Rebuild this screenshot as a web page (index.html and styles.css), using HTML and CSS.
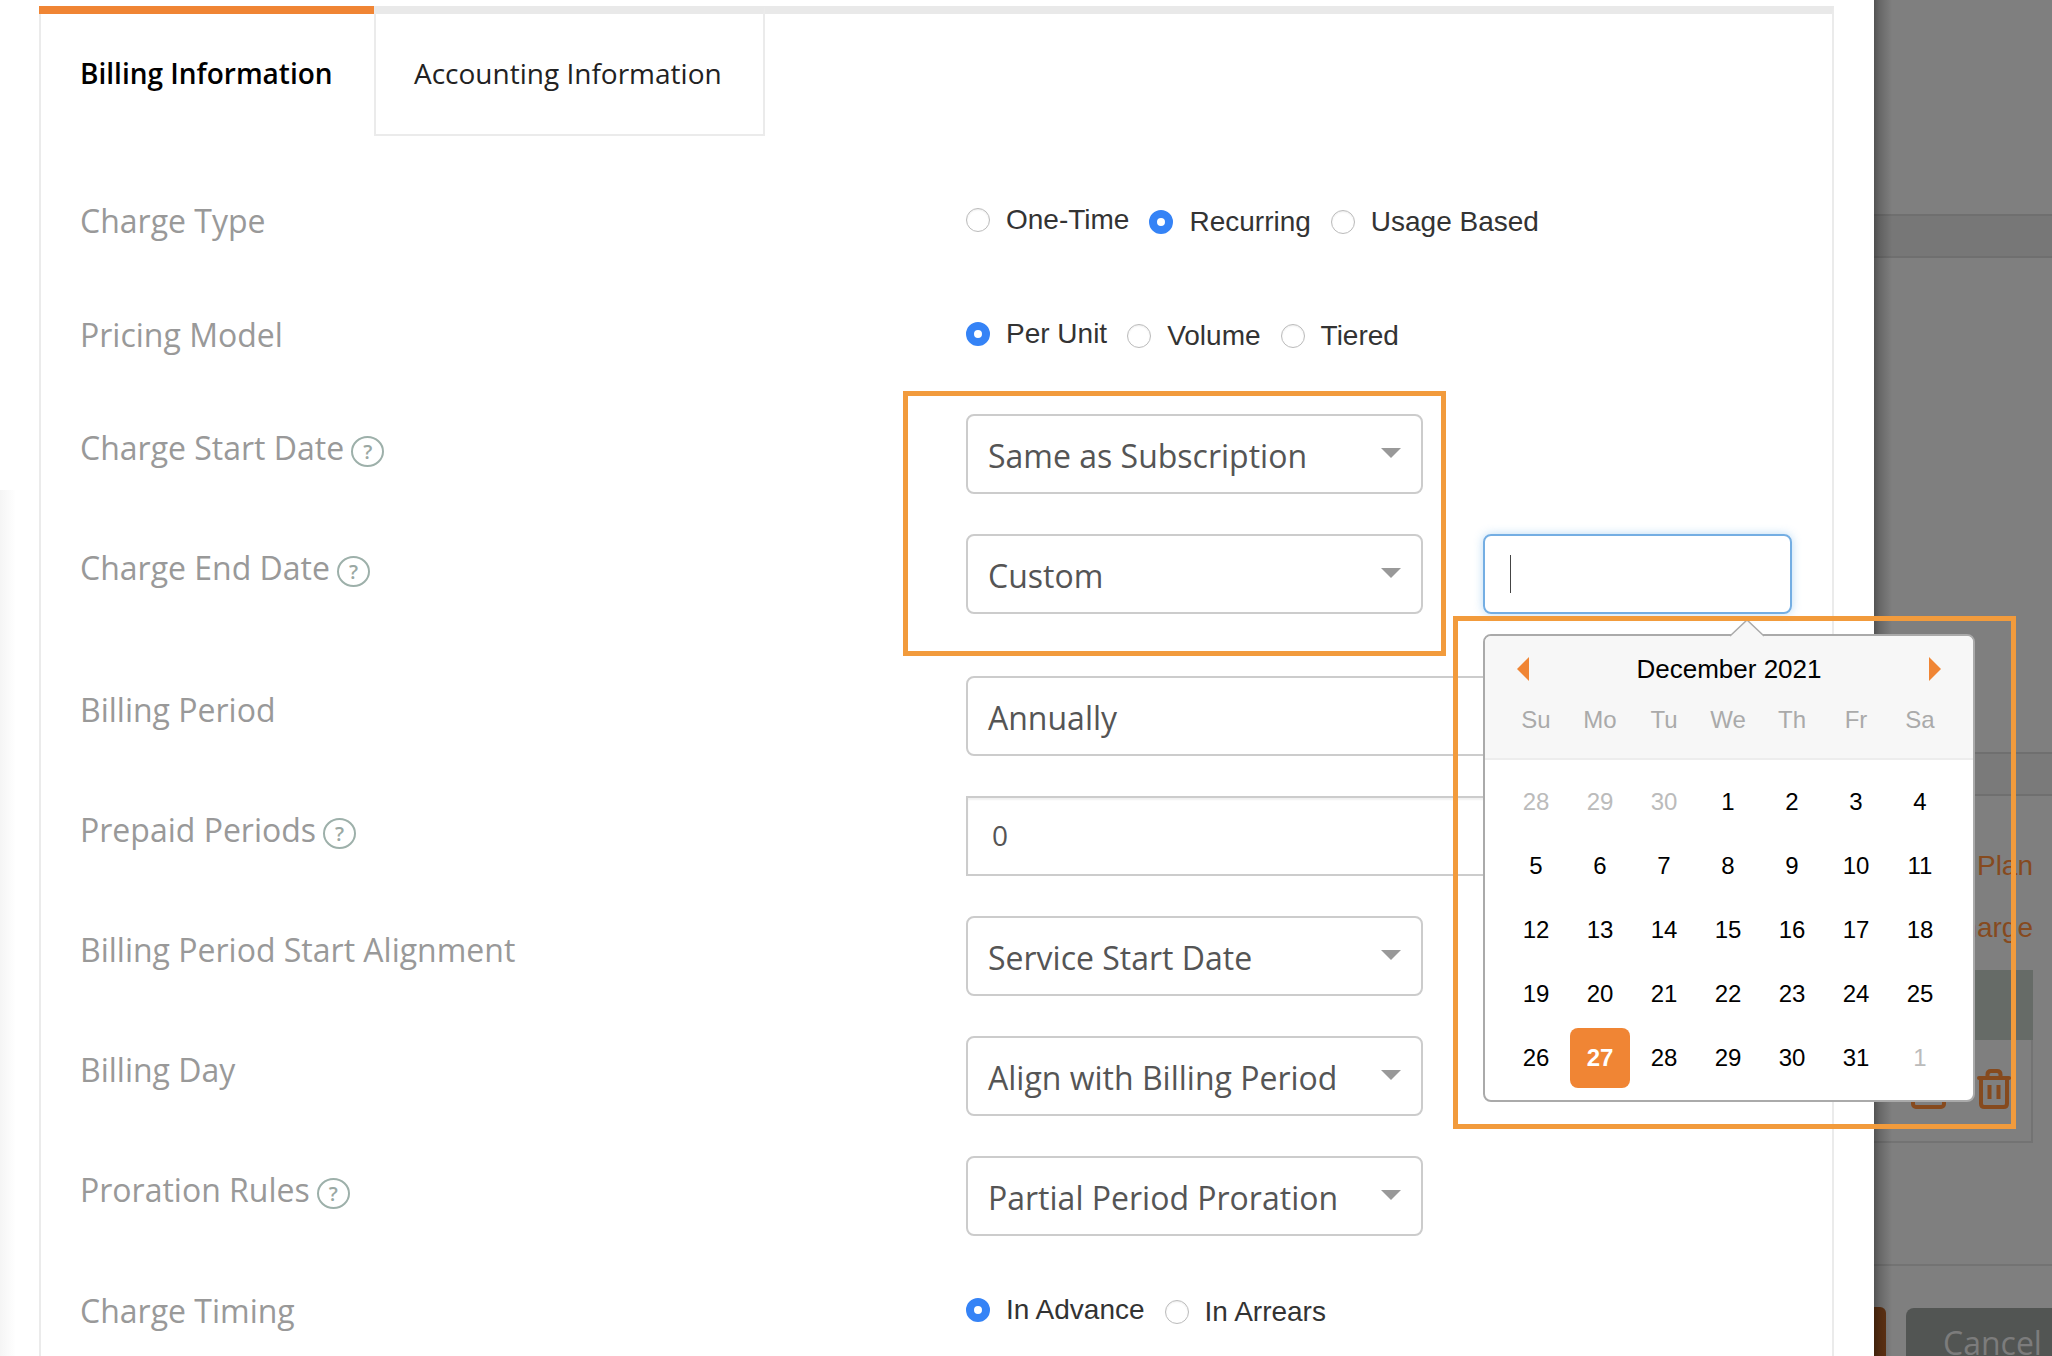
FILE: index.html
```html
<!DOCTYPE html>
<html lang="en">
<head>
<meta charset="UTF-8">
<meta name="viewport" content="width=device-width, initial-scale=1.0">
<title>Billing Information</title>
<link rel="stylesheet" href="styles.css">
</head>
<body>

<div class="page">

  <!-- Drawer with the charge form -->
  <div class="drawer">
    <div class="panel">
      <div class="tabs">
        <div class="tab tab-active">Billing Information</div>
        <div class="tab">Accounting Information</div>
      </div>

      <div class="form">
        <div class="form-row radio-row row-wide">
          <div class="field-label">Charge Type</div>
          <div class="radio-group">
            <label class="radio radio-first"><span class="radio-dot"></span>One-Time</label>
            <label class="radio"><span class="radio-dot checked"></span>Recurring</label>
            <label class="radio"><span class="radio-dot"></span>Usage Based</label>
          </div>
        </div>

        <div class="form-row radio-row">
          <div class="field-label">Pricing Model</div>
          <div class="radio-group">
            <label class="radio radio-first"><span class="radio-dot checked"></span>Per Unit</label>
            <label class="radio"><span class="radio-dot"></span>Volume</label>
            <label class="radio"><span class="radio-dot"></span>Tiered</label>
          </div>
        </div>

        <div class="form-row">
          <div class="field-label">Charge Start Date<span class="help">?</span></div>
          <div class="select">Same as Subscription<span class="select-arrow"></span></div>
        </div>

        <div class="form-row row-wide">
          <div class="field-label">Charge End Date<span class="help">?</span></div>
          <div class="field-group">
            <div class="select">Custom<span class="select-arrow"></span></div>
            <div class="date-input"><span class="text-cursor"></span></div>
          </div>
        </div>

        <div class="form-row">
          <div class="field-label">Billing Period</div>
          <div class="select select-long">Annually<span class="select-arrow"></span></div>
        </div>

        <div class="form-row">
          <div class="field-label">Prepaid Periods<span class="help">?</span></div>
          <div class="number-input">0</div>
        </div>

        <div class="form-row">
          <div class="field-label">Billing Period Start Alignment</div>
          <div class="select">Service Start Date<span class="select-arrow"></span></div>
        </div>

        <div class="form-row">
          <div class="field-label">Billing Day</div>
          <div class="select">Align with Billing Period<span class="select-arrow"></span></div>
        </div>

        <div class="form-row row-wide">
          <div class="field-label">Proration Rules<span class="help">?</span></div>
          <div class="select">Partial Period Proration<span class="select-arrow"></span></div>
        </div>

        <div class="form-row radio-row">
          <div class="field-label">Charge Timing</div>
          <div class="radio-group">
            <label class="radio radio-first"><span class="radio-dot checked"></span>In Advance</label>
            <label class="radio"><span class="radio-dot"></span>In Arrears</label>
          </div>
        </div>
      </div>
    </div>
  </div>

  <!-- Dimmed page behind the drawer -->
  <div class="backdrop">
    <div class="band"></div>
    <div class="band band-second"></div>
    <div class="actions">
      <div class="action">Add Plan</div>
      <div class="action">Add Charge</div>
    </div>
    <div class="charge-table">
      <div class="charge-head"></div>
      <div class="charge-row">
        <svg class="icon" width="35" height="40" viewBox="0 0 35 40" fill="none" stroke="#864a1e" stroke-width="4">
          <rect x="2" y="8" width="31" height="30" rx="3"/>
        </svg>
        <svg class="icon" width="34" height="40" viewBox="0 0 34 40" fill="none" stroke="#864a1e" stroke-width="4" stroke-linecap="round">
          <path d="M2 9H32"/>
          <path d="M10.500 8V5.500Q10.500 2 14 2H20Q23.500 2 23.500 5.500V8"/>
          <path d="M4 10V34.500Q4 38 7.500 38H26.500Q30 38 30 34.500V10"/>
          <path d="M12.500 16V30M21.500 16V30" stroke-linecap="butt"/>
        </svg>
      </div>
    </div>
    <div class="footer">
      <div class="btn-save"></div>
      <div class="btn-cancel">Cancel</div>
    </div>
  </div>

  <!-- Date picker -->
  <div class="calendar">
    <svg class="calendar-caret" width="36" height="18" viewBox="0 0 36 18">
      <path d="M1 17L18 1L35 17" fill="#f7f7f7" stroke="#aaaaaa" stroke-width="1.500"/>
    </svg>
    <div class="calendar-head">
      <div class="calendar-title">
        <span class="nav-prev"></span>
        <span>December 2021</span>
        <span class="nav-next"></span>
      </div>
      <div class="calendar-grid weekdays">
        <div>Su</div><div>Mo</div><div>Tu</div><div>We</div><div>Th</div><div>Fr</div><div>Sa</div>
      </div>
    </div>
    <div class="calendar-grid days">
      <div class="muted">28</div><div class="muted">29</div><div class="muted">30</div><div>1</div><div>2</div><div>3</div><div>4</div>
      <div>5</div><div>6</div><div>7</div><div>8</div><div>9</div><div>10</div><div>11</div>
      <div>12</div><div>13</div><div>14</div><div>15</div><div>16</div><div>17</div><div>18</div>
      <div>19</div><div>20</div><div>21</div><div>22</div><div>23</div><div>24</div><div>25</div>
      <div>26</div><div class="today">27</div><div>28</div><div>29</div><div>30</div><div>31</div><div class="muted">1</div>
    </div>
  </div>

  <!-- Orange callouts drawn over the screenshot -->
  <div class="callout callout-fields"></div>
  <div class="callout callout-calendar"></div>

</div>

</body>
</html>
```

FILE: styles.css
```css
body {
  margin: 0;
  padding: 0;
  font-family: "Open Sans", sans-serif;
  background-color: #fff;
}

.page {
  position: relative;
  display: flex;
  width: 2052px;
  height: 1356px;
  overflow: hidden;
}

/* Drawer */
.drawer {
  position: relative;
  width: 1874px;
  flex-shrink: 0;
  padding-top: 6px;
  box-sizing: border-box;
  background-color: #fff;
}

.drawer::before {
  content: "";
  position: absolute;
  left: 0;
  top: 490px;
  bottom: 0;
  width: 16px;
  background: linear-gradient(to right, #f5f5f5, #fff);
}

.panel {
  width: 1795px;
  margin-left: 39px;
  box-sizing: border-box;
  height: 1400px;
  border-top: 8px solid #e9e9e9;
  border-left: 2px solid #ebebeb;
  border-right: 2px solid #ebebeb;
}

/* Tabs */
.tabs {
  display: flex;
  margin-top: -8px;
}

.tab {
  box-sizing: border-box;
  width: 391px;
  height: 130px;
  padding-left: 38px;
  border-top: 8px solid transparent;
  border-left: 2px solid #ebebeb;
  border-right: 2px solid #ebebeb;
  border-bottom: 2px solid #ebebeb;
  font-size: 28px;
  line-height: 118px;
  color: #222;
}

.tab-active {
  width: 335px;
  margin-left: -2px;
  padding-left: 41px;
  border: none;
  border-top: 8px solid #f08534;
  font-weight: 600;
  color: #000;
}

/* Form rows */
.form {
  margin-top: 72px;
  padding-left: 39px;
}

.form-row {
  display: grid;
  grid-template-columns: 886px 1fr;
  height: 80px;
  margin-bottom: 40px;
}

.row-wide {
  margin-bottom: 62px;
}

.radio-row {
  height: 52px;
}

.field-label {
  padding-top: 12px;
  font-size: 32px;
  line-height: 44px;
  color: #999;
  white-space: nowrap;
}

.radio-row .field-label {
  padding-top: 0;
  line-height: 26px;
}

.help {
  display: inline-block;
  overflow: hidden;
  width: 33px;
  height: 31px;
  margin-left: 7px;
  box-sizing: border-box;
  border: 2px solid #9db0aa;
  border-radius: 50%;
  font-size: 20px;
  font-weight: 600;
  line-height: 28px;
  text-align: center;
  vertical-align: -7px;
  color: #9aa8a3;
}

/* Radios */
.radio-group {
  display: flex;
  font-family: "Liberation Sans", Arial, sans-serif;
  font-size: 28px;
  color: #333;
}

.radio {
  display: flex;
  align-items: flex-start;
  gap: 16px;
  height: 52px;
  margin-right: 20px;
  padding-top: 2px;
  line-height: 24px;
}

.radio-first {
  padding-top: 0;
}

.radio-dot {
  box-sizing: border-box;
  width: 24px;
  height: 24px;
  flex-shrink: 0;
  border: 1px solid #bbb;
  border-radius: 50%;
  box-shadow: inset 0 1px 2px rgba(0, 0, 0, 0.08);
  background-color: #fff;
}

.radio-dot.checked {
  border: 8px solid #3583f6;
  box-shadow: none;
}

/* Selects and inputs */
.field-group {
  display: flex;
  gap: 60px;
}

.select {
  position: relative;
  display: flex;
  align-items: center;
  box-sizing: border-box;
  width: 457px;
  height: 80px;
  padding: 3px 20px 0 20px;
  border: 2px solid #ccc;
  border-radius: 8px;
  font-size: 32px;
  color: #555;
  white-space: nowrap;
}

.select-long {
  width: 826px;
}

.select-arrow {
  margin-left: auto;
  margin-top: -6px;
  border-left: 10px solid transparent;
  border-right: 10px solid transparent;
  border-top: 10px solid #999;
}

.number-input {
  box-sizing: border-box;
  width: 826px;
  height: 80px;
  padding-left: 24px;
  border: 2px solid #ccc;
  box-shadow: inset 0 2px 2px rgba(0, 0, 0, 0.06);
  font-size: 28px;
  line-height: 74px;
  color: #555;
}

.date-input {
  display: flex;
  align-items: center;
  box-sizing: border-box;
  width: 309px;
  height: 80px;
  padding-left: 25px;
  border: 2px solid #74aee3;
  border-radius: 8px;
  box-shadow: 0 0 10px rgba(102, 175, 233, 0.45);
}

.text-cursor {
  width: 1px;
  height: 38px;
  background-color: #444;
}

/* Dimmed page */
.backdrop {
  position: relative;
  flex: 1;
  padding-top: 214px;
  padding-right: 19px;
  background-color: #7f7f7f;
}

.backdrop::before {
  content: "";
  position: absolute;
  left: 0;
  top: 0;
  bottom: 0;
  width: 18px;
  background: linear-gradient(to right, rgba(0, 0, 0, 0.35), rgba(0, 0, 0, 0.18) 6px, rgba(0, 0, 0, 0));
}

.band {
  box-sizing: border-box;
  height: 44px;
  margin-right: -19px;
  border-top: 2px solid #6f6f6f;
  border-bottom: 2px solid #6f6f6f;
  background-color: #777;
}

.band-second {
  margin-top: 494px;
  background-color: #7a7a7a;
}

.actions {
  margin-top: 39px;
  font-family: "Liberation Sans", Arial, sans-serif;
  font-size: 28px;
  line-height: 62px;
  text-align: right;
  color: #864a1e;
  white-space: nowrap;
}

.charge-table {
  margin-top: 11px;
  box-sizing: border-box;
  height: 173px;
  border-right: 2px solid #737373;
  border-bottom: 2px solid #737373;
}

.charge-head {
  height: 70px;
  margin-right: -2px;
  background-color: #666b67;
}

.charge-row {
  display: flex;
  justify-content: flex-end;
  gap: 31px;
  padding-top: 29px;
  padding-right: 20px;
}

.footer {
  display: flex;
  gap: 20px;
  margin-top: 121px;
  margin-right: -19px;
  padding-top: 41px;
  border-top: 2px solid #737373;
}

.btn-save {
  width: 12px;
  height: 60px;
  border-top-right-radius: 6px;
  background-color: #633414;
}

.btn-cancel {
  flex: 1;
  height: 60px;
  margin-top: 1px;
  padding-left: 37px;
  border-radius: 8px 0 0 0;
  font-size: 32px;
  line-height: 70px;
  color: #7c7c7c;
  background-color: #525553;
}

/* Date picker */
.calendar {
  position: absolute;
  left: 1483px;
  top: 634px;
  box-sizing: border-box;
  width: 492px;
  height: 468px;
  border: 2px solid #aaa;
  border-radius: 8px;
  font-family: "Liberation Sans", Arial, sans-serif;
  color: #000;
  background-color: #fff;
}

.calendar-caret {
  position: absolute;
  left: 244px;
  top: -17px;
}

.calendar-head {
  box-sizing: border-box;
  height: 124px;
  border-bottom: 2px solid #ededed;
  border-radius: 6px 6px 0 0;
  background-color: #f7f7f7;
}

.calendar-title {
  display: flex;
  justify-content: space-between;
  align-items: center;
  height: 46px;
  padding: 10px 32px 0;
  font-size: 26px;
  line-height: 46px;
}

.nav-prev, .nav-next {
  border-top: 12px solid transparent;
  border-bottom: 12px solid transparent;
}

.nav-prev {
  border-right: 12px solid #f08534;
}

.nav-next {
  border-left: 12px solid #f08534;
}

.calendar-grid {
  display: grid;
  grid-template-columns: repeat(7, 60px);
  column-gap: 4px;
  padding-left: 21px;
  text-align: center;
  font-size: 24px;
}

.weekdays {
  margin-top: 8px;
  line-height: 40px;
  color: #aaa;
}

.days {
  row-gap: 4px;
  padding-top: 12px;
  line-height: 60px;
}

.days .muted {
  color: #bbb;
}

.days .today {
  border-radius: 8px;
  font-weight: 700;
  color: #fff;
  background-color: #f08534;
}

/* Orange callouts */
.callout {
  position: absolute;
  box-sizing: border-box;
  border: 5px solid #f29b3c;
}

.callout-fields {
  left: 903px;
  top: 391px;
  width: 543px;
  height: 265px;
}

.callout-calendar {
  left: 1453px;
  top: 616px;
  width: 563px;
  height: 513px;
}
```
